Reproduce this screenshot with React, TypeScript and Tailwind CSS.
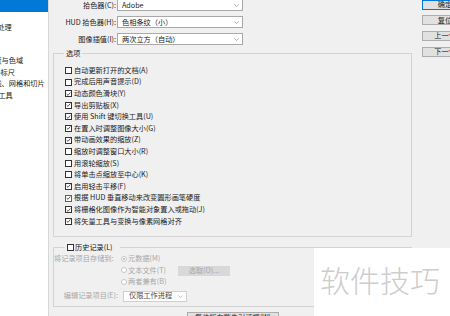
import React from 'react'

const font = "font-['Noto_Sans_CJK_SC','Noto_Sans',sans-serif]"

const options: { label: string; checked: boolean; focus?: boolean }[] = [
  { label: '自动更新打开的文档(A)', checked: false },
  { label: '完成后用声音提示(D)', checked: false },
  { label: '动态颜色滑块(Y)', checked: true },
  { label: '导出剪贴板(X)', checked: true },
  { label: '使用 Shift 键切换工具(U)', checked: true },
  { label: '在置入时调整图像大小(G)', checked: true },
  { label: '带动画效果的缩放(Z)', checked: true },
  { label: '缩放时调整窗口大小(R)', checked: false },
  { label: '用滚轮缩放(S)', checked: false },
  { label: '将单击点缩放至中心(K)', checked: false },
  { label: '启用轻击平移(F)', checked: true },
  { label: '根据 HUD 垂直移动来改变圆形画笔硬度', checked: true, focus: true },
  { label: '将栅格化图像作为智能对象置入或拖动(J)', checked: true },
  { label: '将矢量工具与变换与像素网格对齐', checked: true },
]

const Checkbox = ({ checked, focus }: { checked: boolean; focus?: boolean }) => (
  <span
    className={`flex h-[7px] w-[7px] shrink-0 items-center justify-center border bg-white ${
      focus ? 'border-[#0078d7]' : 'border-[#333333]'
    }`}
  >
    {checked && (
      <svg width="6" height="6" viewBox="0 0 6 6">
        <path d="M0.8 3 L2.4 4.6 L5.2 1.2" fill="none" stroke="#222" strokeWidth="0.9" />
      </svg>
    )}
  </span>
)

const Radio = ({ checked }: { checked?: boolean }) => (
  <span className="flex h-[6px] w-[6px] shrink-0 items-center justify-center rounded-full border border-[#c4c4c4] bg-white">
    {checked && <span className="h-[2px] w-[2px] rounded-full bg-[#b0b0b0]" />}
  </span>
)

const Chevron = ({ color = '#8a8a8a' }: { color?: string }) => (
  <svg width="5" height="3" viewBox="0 0 5 3" className="shrink-0">
    <path d="M0.3 0.3 L2.5 2.5 L4.7 0.3" fill="none" stroke={color} strokeWidth="0.7" />
  </svg>
)

const SelectRow = ({ label, value }: { label: string; value: string }) => (
  <div className="flex h-[12px] shrink-0 items-center">
    <div className="w-[63px] text-right whitespace-nowrap">{label}</div>
    <div className="ml-[1px] flex h-full w-[126px] items-center justify-between border border-[#a9a9a9] bg-white pr-[3px] pl-[4px]">
      <span className="whitespace-nowrap">{value}</span>
      <Chevron />
    </div>
  </div>
)

const Sidebar = () => (
  <div className="flex w-[49px] shrink-0 flex-col border-r border-[#d7d7d7] bg-white">
    <div className="h-[12px] shrink-0 bg-[#0078d7]" />
    <div className="mt-[10.25px] flex h-[11.5px] shrink-0 items-center">
      <span className="ml-[-17px] whitespace-nowrap">文件处理</span>
    </div>
    <div className="mt-[21.5px] flex h-[11.4px] shrink-0 items-center">
      <span className="ml-[-20px] whitespace-nowrap">透明度与色域</span>
    </div>
    <div className="flex h-[11.4px] shrink-0 items-center">
      <span className="ml-[-21px] whitespace-nowrap">单位与标尺</span>
    </div>
    <div className="flex h-[11.4px] shrink-0 items-center">
      <span className="ml-[-20px] whitespace-nowrap">参考线、网格和切片</span>
    </div>
    <div className="flex h-[11.4px] shrink-0 items-center">
      <span className="ml-[-16px] whitespace-nowrap">增效工具</span>
    </div>
  </div>
)

const SideButton = ({ label, primary }: { label: string; primary?: boolean }) => (
  <div
    className={`flex h-[10px] w-[46px] shrink-0 items-center justify-center border bg-[#e1e1e1] ${
      primary ? 'border-[#0078d7]' : 'border-[#adadad]'
    }`}
  >
    {label}
  </div>
)

export default function App() {
  return (
    <div
      className={`relative flex h-[316px] w-[450px] overflow-hidden bg-[#f0f0f0] text-[7.2px] leading-none text-[#1a1a1a] ${font}`}
    >
      <Sidebar />

      <div className="flex w-[363px] shrink-0 flex-col pl-[4px]">
        <div className="mt-[-0.8px] flex shrink-0 flex-col gap-[5px]">
          <SelectRow label="拾色器(C):" value="Adobe" />
          <SelectRow label="HUD 拾色器(H):" value="色相条纹（小）" />
          <SelectRow label="图像插值(I):" value="两次立方（自动）" />
        </div>

        {/* 选项 */}
        <div className="relative mt-[7.8px] h-[184px] shrink-0 border border-[#d3d3d3] pt-[10.7px] pl-[11px]">
          <div className="absolute top-[-4px] left-[10px] bg-[#f0f0f0] px-[2px]">选项</div>
          {options.map((o) => (
            <div key={o.label} className="flex h-[11.6px] items-center gap-[2px]">
              <Checkbox checked={o.checked} focus={o.focus} />
              <span className="whitespace-nowrap">{o.label}</span>
            </div>
          ))}
        </div>

        {/* 历史记录 */}
        <div className="relative mt-[10px] h-[60px] shrink-0 border border-[#d3d3d3] pt-[5.25px] text-[#a8a8a8]">
          <div className="absolute top-[-4px] left-[11px] flex items-center gap-[1px] bg-[#f0f0f0] pr-[7px] pl-[2px] text-[#111]">
            <Checkbox checked={false} />
            <span>历史记录(L)</span>
          </div>
          <div className="flex h-[11.5px] items-center">
            <span className="w-[59px] text-right whitespace-nowrap">将记录项目存储到:</span>
            <span className="ml-[8px] flex items-center gap-[1px]">
              <Radio checked />
              <span>元数据(M)</span>
            </span>
          </div>
          <div className="flex h-[11.5px] items-center pl-[67px]">
            <span className="flex w-[57px] items-center gap-[1px]">
              <Radio />
              <span className="whitespace-nowrap">文本文件(T)</span>
            </span>
            <span className="flex h-[10px] w-[52px] items-center justify-center bg-[#d8d8d8] whitespace-nowrap">
              选取(O)...
            </span>
          </div>
          <div className="flex h-[11.5px] items-center pl-[67px]">
            <span className="flex items-center gap-[1px]">
              <Radio />
              <span className="whitespace-nowrap">两者兼有(B)</span>
            </span>
          </div>
          <div className="mt-[2.75px] flex h-[11px] items-center">
            <span className="w-[64px] text-right whitespace-nowrap">编辑记录项目(E):</span>
            <div className="ml-[5px] flex h-full w-[64px] items-center justify-between border border-[#d0d0d0] bg-white pr-[3px] pl-[5px] text-[#4a4a4a]">
              <span className="whitespace-nowrap">仅限工作进程</span>
              <Chevron color="#b5b5b5" />
            </div>
          </div>
        </div>

        <div className="mt-[5px] ml-[134px] flex h-[12px] w-[92px] shrink-0 items-center justify-center border border-[#adadad] bg-[#e1e1e1] whitespace-nowrap">
          复位所有警告对话框(W)
        </div>
      </div>

      <div className="mt-[-0.5px] ml-[10px] flex shrink-0 flex-col gap-[5.8px]">
        <SideButton label="确定" primary />
        <SideButton label="复位" />
        <SideButton label="上一个" />
        <SideButton label="下一个" />
      </div>

      {/* watermark */}
      <div className="absolute top-[248px] left-[314px] h-[68px] w-[136px] bg-white pt-[16px] pl-[6px] text-[30px] leading-[30px] font-light whitespace-nowrap text-[#cdcdcd]">
        软件技巧
      </div>
    </div>
  )
}
